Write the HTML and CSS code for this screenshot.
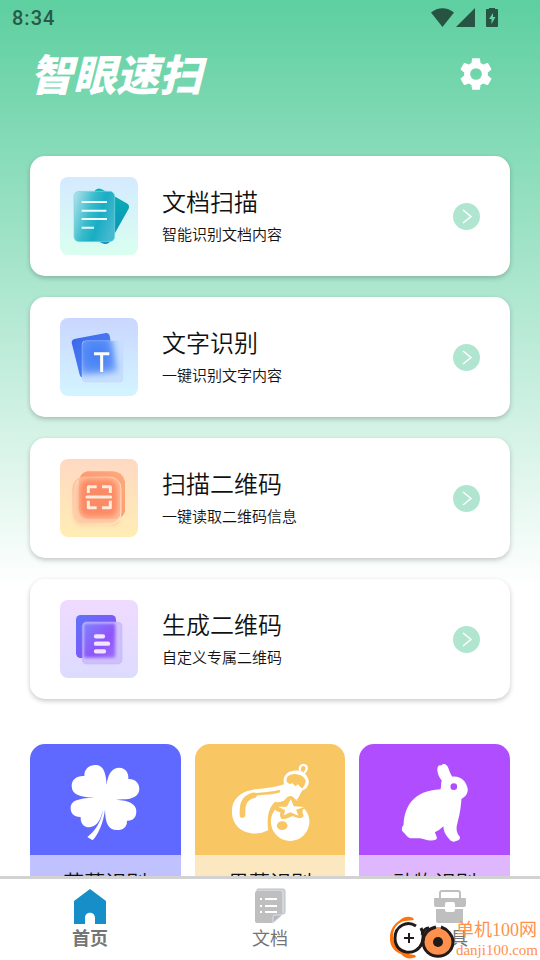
FILE: index.html
```html
<!DOCTYPE html>
<html lang="zh-CN">
  <head>
    <meta charset="UTF-8" />
    <meta name="viewport" content="width=device-width, initial-scale=1" />
    <title>智眼速扫</title>
    <link rel="stylesheet" href="styles.css">
  </head>
  <body>
    <!-- Status bar -->
    <div class="status-bar">
      <span class="clock">8:34</span>
      <svg class="status-icons" viewBox="0 0 68 20" aria-hidden="true">
        <path d="M0 4.500C7-1.200 16-1.200 23 4.500L11.500 19Z" />
        <path d="M44 0V19H25Z" />
        <path fill-rule="evenodd" d="M58 0h6v1h2q1 0 1 1v16q0 1-1 1H56q-1 0-1-1V2q0-1 1-1h2ZM62 5l-4 6h2.500v5l4-7H62Z" />
      </svg>
    </div>

    <main>
      <header class="top">
        <h1>智眼速扫</h1>
        <button class="settings" aria-label="设置">
          <svg viewBox="0 0 24 24"><path d="M19.430 12.980c.04-.32.07-.64.07-.98s-.03-.66-.07-.98l2.110-1.650c.19-.15.24-.42.12-.64l-2-3.460c-.12-.22-.39-.3-.61-.22l-2.490 1c-.52-.4-1.080-.73-1.690-.98l-.38-2.650C14.460 2.180 14.250 2 14 2h-4c-.25 0-.46.18-.49.42l-.38 2.650c-.61.25-1.170.59-1.690.98l-2.490-1c-.23-.09-.49 0-.61.22l-2 3.460c-.13.22-.07.49.12.64l2.110 1.650c-.04.32-.07.65-.07.98s.03.66.07.98l-2.110 1.650c-.19.15-.24.42-.12.64l2 3.460c.12.22.39.3.61.22l2.490-1c.52.4 1.080.73 1.690.98l.38 2.650c.03.24.24.42.49.42h4c.25 0 .46-.18.49-.42l.38-2.650c.61-.25 1.170-.59 1.690-.98l2.490 1c.23.09.49 0 .61-.22l2-3.460c.12-.22.07-.49-.12-.64l-2.110-1.650zM12 15.700a3.700 3.700 0 1 1 0-7.400a3.700 3.700 0 0 1 0 7.400z" /></svg>
        </button>
      </header>

      <!-- Main features -->
      <div class="cards">
        <button class="card">
          <svg class="thumb thumb-doc" viewBox="120 96 234 234" aria-hidden="true">
            <defs>
              <linearGradient id="docBack" x1="0" y1="0" x2="0" y2="1"><stop offset="0" stop-color="#08b3b3" /><stop offset="1" stop-color="#0a8cba" /></linearGradient>
              <linearGradient id="docFront" x1="0" y1=".2" x2="1" y2=".6"><stop offset="0" stop-color="#a5dde9" /><stop offset=".4" stop-color="#37bccb" /><stop offset=".65" stop-color="#19adc4" /><stop offset="1" stop-color="#45b9cf" /></linearGradient>
            </defs>
            <path fill="url(#docBack)" d="M226 135q10-9 24 0l70 40q10 6 6 16l-56 99q-9 12-25 4l-70-40q-7-5-3-14Z" />
            <rect x="162" y="139" width="122" height="151" rx="15" fill="url(#docFront)" stroke="#7bd8dc" stroke-width="2" />
            <path stroke="#effcff" stroke-width="6" d="M185 171h76M185 197h74M185 222h76M185 248h37" />
          </svg>
          <span class="card-text"><strong>文档扫描</strong><small>智能识别文档内容</small></span>
          <svg class="arrow" viewBox="0 0 27 27" aria-hidden="true"><circle cx="13.500" cy="13.500" r="13.500" /><path d="M10 7l8 6.500L10 20" /></svg>
        </button>

        <button class="card">
          <svg class="thumb thumb-text" viewBox="30 39 234 234" aria-hidden="true">
            <defs>
              <linearGradient id="textBack" x1="0" y1="0" x2="1" y2="1"><stop offset="0" stop-color="#3968e8" /><stop offset="1" stop-color="#5488ff" /></linearGradient>
              <radialGradient id="textFront" cx=".5" cy=".5" r=".65"><stop offset="0" stop-color="#3e7cf5" /><stop offset=".6" stop-color="#5b8ff7" /><stop offset="1" stop-color="#86adfb" /></radialGradient>
              <filter id="soft" x="-20%" y="-20%" width="140%" height="140%"><feGaussianBlur stdDeviation="9" /></filter>
              <clipPath id="textClip"><rect x="96" y="107" width="123" height="125" rx="12" /></clipPath>
            </defs>
            <path fill="url(#textBack)" d="M76 101l92-17q9-1 11 8l19 107q0 8-8 10l-92 8q-7 0-9-8L65 113q0-10 11-12Z" />
            <g clip-path="url(#textClip)">
              <rect x="96" y="107" width="123" height="125" fill="#c6dffd" />
              <path d="M76 85l108 5 18 110-110 10Z" fill="url(#textFront)" filter="url(#soft)" />
            </g>
            <rect x="96" y="107" width="123" height="125" rx="12" fill="none" stroke="#c0d8ff" stroke-opacity=".5" stroke-width="2" />
            <path fill="none" stroke="#fff" stroke-width="9" d="M132 146h46M155 146v55" />
          </svg>
          <span class="card-text"><strong>文字识别</strong><small>一键识别文字内容</small></span>
          <svg class="arrow" viewBox="0 0 27 27" aria-hidden="true"><circle cx="13.500" cy="13.500" r="13.500" /><path d="M10 7l8 6.500L10 20" /></svg>
        </button>

        <button class="card">
          <svg class="thumb thumb-scan" viewBox="30 27 234 234" aria-hidden="true">
            <defs>
              <linearGradient id="scanBack" x1="1" y1="0" x2="0" y2="1"><stop offset="0" stop-color="#fba273" /><stop offset="1" stop-color="#ff7e58" /></linearGradient>
              <linearGradient id="scanEdge" x1="0" y1="0" x2="1" y2="1"><stop offset="0" stop-color="#ffb08c" /><stop offset="1" stop-color="#fff0dc" /></linearGradient>
              <filter id="scanSoft" x="-20%" y="-20%" width="140%" height="140%"><feGaussianBlur stdDeviation="8" /></filter>
            </defs>
            <path fill="#f6b487" opacity=".5" filter="url(#scanSoft)" d="M75 110h130v115H95q-20 0-20-20Z" />
            <path fill="url(#scanBack)" opacity=".85" d="M112 64h75q30 0 38 30v90q-5 20-25 22H112q-25-3-25-30V92q3-23 25-28Z" />
            <rect x="69" y="81" width="144" height="141" rx="34" fill="#ffcbab" fill-opacity=".65" />
            <rect x="90" y="88" width="112" height="112" rx="25" fill="#fb8059" opacity=".8" filter="url(#scanSoft)" />
            <rect x="69" y="81" width="144" height="141" rx="34" fill="none" stroke="url(#scanEdge)" stroke-width="3" />
            <g fill="none" stroke="#ffeade" stroke-width="9" stroke-linejoin="round">
              <path d="M115 129v-19h25M156 110h25v19M115 152v21h25M156 173h25v-21" />
              <path stroke-linecap="round" d="M111 141h71" />
            </g>
          </svg>
          <span class="card-text"><strong>扫描二维码</strong><small>一键读取二维码信息</small></span>
          <svg class="arrow" viewBox="0 0 27 27" aria-hidden="true"><circle cx="13.500" cy="13.500" r="13.500" /><path d="M10 7l8 6.500L10 20" /></svg>
        </button>

        <button class="card">
          <svg class="thumb thumb-make" viewBox="30 30 234 234" aria-hidden="true">
            <defs>
              <linearGradient id="makeBack" x1="0" y1="0" x2="1" y2="1"><stop offset="0" stop-color="#5e74f8" /><stop offset="1" stop-color="#9245fb" /></linearGradient>
              <linearGradient id="makeFront" x1="0" y1="0" x2="1" y2="1"><stop offset="0" stop-color="#7d83fb" /><stop offset=".6" stop-color="#9053fa" /><stop offset="1" stop-color="#9b70f8" /></linearGradient>
              <filter id="makeSoft" x="-20%" y="-20%" width="140%" height="140%"><feGaussianBlur stdDeviation="5" /></filter>
            </defs>
            <rect x="78" y="75" width="120" height="129" rx="14" fill="url(#makeBack)" />
            <rect x="98" y="97" width="117" height="124" rx="12" fill="#cfc0fb" />
            <rect x="101" y="100" width="95" height="103" rx="6" fill="url(#makeFront)" filter="url(#makeSoft)" />
            <rect x="98" y="97" width="117" height="124" rx="12" fill="none" stroke="#bdb0ff" stroke-opacity=".5" stroke-width="5" />
            <path stroke="#f1e6ff" stroke-width="13" stroke-linecap="round" d="M138 139h21M138 161h36M138 184h24" />
          </svg>
          <span class="card-text"><strong>生成二维码</strong><small>自定义专属二维码</small></span>
          <svg class="arrow" viewBox="0 0 27 27" aria-hidden="true"><circle cx="13.500" cy="13.500" r="13.500" /><path d="M10 7l8 6.500L10 20" /></svg>
        </button>
      </div>

      <!-- Recognition tiles -->
      <div class="tiles">
        <button class="tile tile-plant">
          <svg viewBox="30 42 450 333" aria-hidden="true">
            <path d="M259 165C262 133 274 113 297 113C315 113 326 128 324 147C343 146 357 159 357 176C357 198 337 207 309 208L287 209C326 211 348 222 348 244C348 262 339 273 320 272C321 289 310 300 290 300C263 300 255 278 254 239C249 279 235 311 217 331L201 321C222 305 244 277 248 238C241 271 230 291 206 292C190 292 180 279 181 261C162 262 151 251 151 235C151 212 170 205 222 203C177 201 154 193 154 167C154 148 171 136 192 138C191 119 205 105 226 105C249 105 257 128 259 165Z" />
          </svg>
          <span>花草识别</span>
        </button>
        <button class="tile tile-fruit">
          <svg viewBox="30 42 453 333" aria-hidden="true">
            <path d="M298 163C250 179 208 173 178 187C151 200 141 221 141 244C141 284 169 311 211 311C225 311 237 307 250 301C245 263 252 230 271 215C281 219 298 216 302 207Q317 191 329 207Q346 211 334 213C346 197 346 190 354 180C369 177 377 156 369 143C361 124 343 120 326 122C302 124 292 145 298 163Z" />
            <path class="cut-line" stroke-width="17" d="M173 255C171 222 178 203 207 196" />
            <path class="cut-line" stroke-width="8" d="M198 196C229 187 254 194 282 184" />
            <path class="cut" d="M306 156Q303 144 311 137Q323 129 340 133Q360 137 363 154Q362 165 353 175Q344 171 340 163L332 169 323 160 314 162Z" />
            <path fill="none" stroke="#fff" stroke-width="7" d="M347 128C341 107 352 103 359 105C368 107 369 120 358 128" />
            <circle cx="317" cy="275" r="66" class="cut" />
            <circle cx="316" cy="275" r="58" />
            <path class="cut" d="M266 224L300 217Q304 199 317 199Q328 199 334 215L336 218 372 225 356 237Q350 245 357 258Q349 271 323 258 301 270 289 266 283 255 287 247 265 243 273 232Z" />
            <path d="M280 230L306 230 318 207 327 229 359 231 334 239 341 257 317 247 297 256 301 241Z" />
            <ellipse cx="292" cy="287" rx="16" ry="13" class="cut" />
          </svg>
          <span>果蔬识别</span>
        </button>
        <button class="tile tile-animal">
          <svg viewBox="27 42 453 333" aria-hidden="true">
            <path d="M272 178C276 166 272 158 276 152C264 137 260 119 264 110Q267 105 274 106Q283 97 291 106C298 114 299 128 308 140C331 137 350 152 354 178C354 193 346 201 335 207C333 239 328 260 323 279C318 295 320 309 330 320Q332 331 323 332Q311 339 302 332C292 320 281 310 281 289Q270 300 255 307L261 322Q263 332 243 332C229 332 222 326 209 325L182 325C171 322 167 312 157 303Q153 295 161 285C163 231 190 182 272 178Z" />
            <circle cx="312" cy="170" r="10" class="cut" />
          </svg>
          <span>动物识别</span>
        </button>
      </div>
    </main>

    <!-- Bottom tabs -->
    <nav class="tabs">
      <a class="tab active" href="#home">
        <svg viewBox="0 0 36 36" aria-hidden="true"><path fill="#168fc9" d="M18 1L34 13V36H23V30C23 23 13 23 13 30V36H2V13Z" /></svg>
        首页
      </a>
      <a class="tab" href="#docs">
        <svg viewBox="0 0 36 36" aria-hidden="true">
          <path fill="#d4d6da" stroke="#bbc0c6" d="M5 4V2q0-1 1-1h25q2 0 2 2v21q0 2-2 2h-4" />
          <path fill="#bfbfbf" d="M5 3H28q2 0 2 2V26L21 35H5q-2 0-2-2V5q0-2 2-2Z" />
          <path fill="#b4b8be" stroke="#dce1e8" d="M21 35V29q0-2 2-2h7Z" />
          <path stroke="#fff" stroke-width="2" d="M8 11h2M13 11h12M8 18h2M13 18h12M8 24h2M13 24h12" />
        </svg>
        文档
      </a>
      <a class="tab" href="#tools">
        <svg viewBox="0 0 36 36" aria-hidden="true">
          <path fill="none" stroke="#bfbfbf" stroke-width="2" d="M8 11V5q0-2 2-2h16q2 0 2 2v6" />
          <path fill="#bfbfbf" d="M3 10H33q1 0 1 1v6q0 2-2 2h-9v-3q0-2-2-2h-6q-2 0-2 2v3H4q-2 0-2-2v-6q0-1 1-1ZM4 21h9v1q0 2 2 2h6q2 0 2-2v-1h8v12q0 2-2 2H6q-2 0-2-2Z" />
        </svg>
        工具
      </a>
    </nav>

    <div class="site-mark">
      <svg viewBox="0 0 66 44" aria-hidden="true">
        <path fill="#ff7410" d="M24 4C23-1 13 0 9 5C-3 12-4 33 11 38Q17 45 26 41L25 39C11 38 3 30 3 20C3 12 8 6 15 5Z" />
        <circle cx="19" cy="22" r="14" fill="#fff" />
        <path fill="none" stroke="#21191a" stroke-width="3" d="M26 10C17 4 5 10 5 22C5 39 27 41 32 27C34 21 33 16 31 12M32 19Q34 12 39 12" />
        <path stroke="#21191a" stroke-width="2" d="M14 22h10M19 17v10" />
        <circle cx="48" cy="26" r="15" fill="#ff914d" />
        <path fill="none" stroke="#21191a" stroke-width="3" d="M46 11C38 13 33 18 33 26C34 45 62 45 63 26C63 19 57 13 51 11" />
        <circle cx="48" cy="26" r="5" fill="#21191a" />
      </svg>
      <div class="site-name">
        <b>单机100网</b>
        <span>danji100.com</span>
      </div>
    </div>
  </body>
</html>
```

FILE: styles.css
```css
* {
  box-sizing: border-box;
}

body {
  margin: 0;
  height: 100vh;
  display: flex;
  flex-direction: column;
  overflow: hidden;
  position: relative;
  background: #fff linear-gradient(#5dcfa0, #fff 588px) no-repeat;
  color: #111;
  font-family: "Noto Sans CJK SC", sans-serif;
}

button {
  border: 0;
  padding: 0;
  background: none;
  color: inherit;
  font: inherit;
  cursor: pointer;
}

.status-bar {
  flex: none;
  height: 36px;
  padding: 0 41px 0 12px;
  display: flex;
  align-items: center;
  justify-content: space-between;
  color: #275b46;
}

.clock {
  font: 500 20px/36px Roboto, sans-serif;
  letter-spacing: 1px;
}

.status-icons {
  width: 68px;
  height: 20px;
  fill: #275442;
}

main {
  flex: 1;
  min-height: 0;
  overflow-y: auto;
  scrollbar-width: none;
  padding: 0 30px 24px;
}

.top {
  height: 76px;
  padding-right: 15px;
  margin-bottom: 44px;
  display: flex;
  align-items: center;
  justify-content: space-between;
}

h1 {
  margin: 0;
  padding-bottom: 4px;
  color: #fff;
  font-size: 43px;
  font-weight: 900;
  font-style: italic;
  line-height: 72px;
}

.settings,
.settings svg {
  display: block;
  width: 38px;
  height: 38px;
  fill: #fff;
}

/* feature cards */
.cards {
  display: flex;
  flex-direction: column;
  gap: 21px;
}

.card {
  height: 120px;
  padding: 0 30px;
  display: flex;
  align-items: center;
  border-radius: 15px;
  background: #fff;
  box-shadow: 0 2px 5px rgba(0, 0, 0, 0.22);
  text-align: left;
}

.thumb {
  flex: none;
  width: 78px;
  height: 78px;
  margin-right: 24px;
  border-radius: 8px;
}

.thumb-doc {
  background: linear-gradient(#d4eaff, #d9fff0);
}

.thumb-text {
  background: linear-gradient(#cad6ff, #d3f5ff);
}

.thumb-scan {
  background: linear-gradient(#ffd9c3, #ffedb5);
}

.thumb-make {
  background: linear-gradient(#f0daff, #dcdcff);
}

.card-text {
  flex: 1;
}

.card-text strong,
.card-text small {
  display: block;
  font-weight: 350;
}

.card-text strong {
  font-size: 24px;
  line-height: 36px;
}

.card-text small {
  font-size: 15px;
  line-height: 30px;
}

.arrow {
  width: 27px;
  height: 27px;
  fill: #b0e6d0;
}

.arrow path {
  fill: none;
  stroke: #fff;
  stroke-width: 1.5;
}

/* recognition tiles */
.tiles {
  margin-top: 45px;
  display: grid;
  grid-template-columns: repeat(3, 1fr);
  gap: 14px;
}

.tile {
  overflow: hidden;
  border-radius: 15px;
  background: var(--tint);
}

.tile svg {
  display: block;
  width: 100%;
  height: 111px;
  fill: #fff;
}

.tile span {
  display: block;
  background: rgba(255, 255, 255, 0.6);
  font-size: 21px;
  font-weight: 350;
  line-height: 52px;
}

.tile .cut {
  fill: var(--tint);
}

.tile .cut-line {
  fill: none;
  stroke: var(--tint);
  stroke-linecap: round;
}

.tile-plant {
  --tint: #5f68ff;
}

.tile-fruit {
  --tint: #f8c662;
}

.tile-animal {
  --tint: #b04dff;
}

/* bottom tabs */
.tabs {
  flex: none;
  height: 84px;
  display: flex;
  border-top: 3px solid #d2d2d2;
  background: #fff;
}

.tab {
  flex: 1;
  padding-top: 9px;
  display: flex;
  flex-direction: column;
  align-items: center;
  color: #757575;
  font-size: 18px;
  line-height: 26px;
  text-decoration: none;
}

.tab.active {
  font-weight: 700;
}

.tab svg {
  width: 36px;
  height: 36px;
}

.site-mark {
  position: absolute;
  right: 2px;
  bottom: 0;
  display: flex;
  align-items: flex-end;
  color: #ff914d;
  pointer-events: none;
}

.site-mark svg {
  width: 66px;
  height: 44px;
}

.site-name {
  font: 15px/20px "Liberation Serif", "Noto Sans CJK SC", serif;
}

.site-name b,
.site-name span {
  display: block;
}

.site-name b {
  font-size: 18px;
  font-weight: 400;
}
```
